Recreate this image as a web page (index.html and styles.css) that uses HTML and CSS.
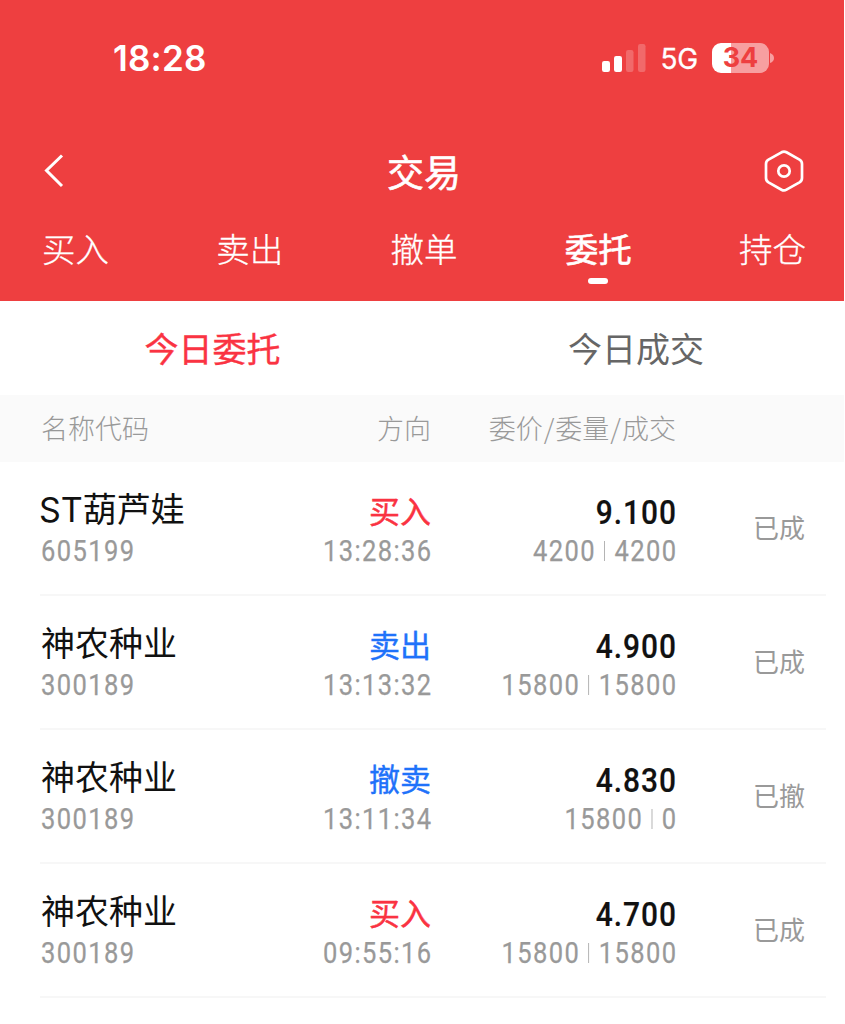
FILE: index.html
```html
<!DOCTYPE html>
<html lang="zh-CN">
<head>
<meta charset="utf-8">
<title>交易</title>
<link rel="stylesheet" href="styles.css">
</head>
<body>
<div class="screen">
  <header class="header">
    <div class="status">
      <span class="clock">18:28</span>
      <div class="status-icons">
        <svg class="signal" width="44" height="28" viewBox="0 0 44 28" fill="#fff">
          <rect x="0" y="17" width="8" height="11" rx="2.2"/>
          <rect x="12" y="12" width="8" height="16" rx="2.2"/>
          <rect x="24" y="6" width="7.5" height="22" rx="2.2" opacity=".22"/>
          <rect x="36" y="0" width="7.5" height="28" rx="2.2" opacity=".22"/>
        </svg>
        <span class="network">5G</span>
        <span class="battery"><span class="level">34</span></span>
        <svg class="cap" width="4" height="10" viewBox="0 0 4 10"><path d="M0 0Q4 1.500 4 5Q4 8.500 0 10Z" fill="#fff" opacity=".5"/></svg>
      </div>
    </div>
    <div class="titlebar">
      <svg class="back" width="20" height="34" viewBox="0 0 20 34" fill="none" stroke="#fff" stroke-width="3"><path d="M18 1.500L2.500 16.500L18 32"/></svg>
      <h1 class="title">交易</h1>
      <svg class="settings" width="40" height="42" viewBox="0 0 40 42" fill="none" stroke="#fff" stroke-width="2.700" stroke-linejoin="round">
        <path d="M17.500 2.300Q20 .9 22.500 2.300L35.500 9.700Q38 11.200 38 14V28Q38 30.800 35.500 32.300L22.500 39.700Q20 41.100 17.500 39.700L4.500 32.300Q2 30.800 2 28V14Q2 11.200 4.500 9.700Z"/>
        <circle cx="20" cy="21" r="5.700"/>
      </svg>
    </div>
    <nav class="tabs">
      <span class="tab">买入</span>
      <span class="tab">卖出</span>
      <span class="tab">撤单</span>
      <span class="tab active">委托</span>
      <span class="tab">持仓</span>
    </nav>
  </header>
  <div class="subtabs">
    <span class="subtab current">今日委托</span>
    <span class="subtab">今日成交</span>
  </div>
  <div class="columns grid">
    <span>名称代码</span>
    <span class="right">方向</span>
    <span class="right">委价<span class="slash">/</span>委量<span class="slash">/</span>成交</span>
  </div>
  <main class="orders">
    <div class="order grid">
      <div class="cell"><div class="name"><span class="latin">ST</span>葫芦娃</div><div class="num">605199</div></div>
      <div class="cell right"><div class="side buy">买入</div><div class="num">13:28:36</div></div>
      <div class="cell right"><div class="price">9.100</div><div class="num amounts"><span>4200</span><i class="bar"></i><span>4200</span></div></div>
      <div class="state">已成</div>
    </div>
    <div class="order grid">
      <div class="cell"><div class="name">神农种业</div><div class="num">300189</div></div>
      <div class="cell right"><div class="side sell">卖出</div><div class="num">13:13:32</div></div>
      <div class="cell right"><div class="price">4.900</div><div class="num amounts"><span>15800</span><i class="bar"></i><span>15800</span></div></div>
      <div class="state">已成</div>
    </div>
    <div class="order grid">
      <div class="cell"><div class="name">神农种业</div><div class="num">300189</div></div>
      <div class="cell right"><div class="side sell">撤卖</div><div class="num">13:11:34</div></div>
      <div class="cell right"><div class="price">4.830</div><div class="num amounts"><span>15800</span><i class="bar"></i><span>0</span></div></div>
      <div class="state">已撤</div>
    </div>
    <div class="order grid">
      <div class="cell"><div class="name">神农种业</div><div class="num">300189</div></div>
      <div class="cell right"><div class="side buy">买入</div><div class="num">09:55:16</div></div>
      <div class="cell right"><div class="price">4.700</div><div class="num amounts"><span>15800</span><i class="bar"></i><span>15800</span></div></div>
      <div class="state">已成</div>
    </div>
  </main>
</div>
</body>
</html>
```
FILE: styles.css
```css
* { box-sizing: border-box; }
body {
  margin: 0;
  background: #fff;
  font-family: "Noto Sans CJK SC", sans-serif;
  overflow: hidden;
}
.screen { width: 844px; height: 1024px; }

.header { height: 301px; background: #ee3f40; color: #fff; }
.status {
  display: flex;
  justify-content: space-between;
  align-items: center;
  height: 116px;
  padding: 0 70px 0 113px;
}
.clock { font: 600 35px/40px Inter, sans-serif; letter-spacing: .2px; }
.status-icons { display: flex; align-items: center; }
.signal { margin-top: -1px; }
.network { margin: 2px 0 0 14px; font: 400 28px/30px Inter, sans-serif; letter-spacing: -.2px; -webkit-text-stroke: .3px #fff; }
.battery {
  display: flex;
  justify-content: center;
  width: 57px;
  height: 30px;
  margin-left: 14px;
  border-radius: 9px;
  background: linear-gradient(90deg, #fff 34%, #f79fa0 34%);
}
.level { color: #ee3f40; font: 700 27px/30px Inter, sans-serif; }
.cap { margin-left: 1px; }

.titlebar {
  display: grid;
  grid-template-columns: 1fr auto 1fr;
  align-items: center;
  height: 110px;
  padding: 0 40px 0 44px;
}
.title { margin: 0; font-size: 37px; line-height: 50px; font-weight: 400; -webkit-text-stroke: .6px #fff; }
.settings { justify-self: end; }
.tabs { display: flex; justify-content: space-between; padding: 0 38px 0 42px; }
.tab {
  display: flex;
  flex-direction: column;
  align-items: center;
  font-size: 33.5px;
  line-height: 44px;
  font-weight: 300;
  -webkit-text-stroke: .3px #fff;
}
.active { font-weight: 400; -webkit-text-stroke: .6px #fff; }
.active::after {
  content: "";
  width: 20px;
  height: 6px;
  margin-top: 8px;
  border-radius: 3px;
  background: #fff;
}

.subtabs { display: grid; grid-template-columns: 425px 422px; height: 94px; }
.subtab { text-align: center; font-size: 34px; line-height: 94px; color: #666; }
.current { color: #fa3342; -webkit-text-stroke: .4px #fa3342; }

.grid { display: grid; grid-template-columns: 200px 190px 245px 129px; }
.right { text-align: right; }
.columns {
  height: 67px;
  padding-left: 41px;
  background: #fafafa;
  color: #999;
  font-size: 27px;
  line-height: 66px;
  font-weight: 300;
}
.slash { padding: 0 1px; }
.order {
  height: 134px;
  margin: 0 18px 0 40px;
  padding-left: 1px;
  border-bottom: 2px solid #f7f7f7;
}
.cell { padding-top: 24px; }
.name, .side, .price { height: 50px; white-space: nowrap; }
.name { font-size: 34px; line-height: 44px; color: #111; }
.latin { margin-left: -2px; font: 400 34px/44px Inter, sans-serif; }
.side { font-size: 31px; line-height: 48px; -webkit-text-stroke: .4px currentColor; }
.buy { color: #fa3342; }
.sell { color: #1f72fa; }
.price, .num { transform: scaleX(.88); transform-origin: left; }
.right > .price, .right > .num { transform-origin: right; }
.price { font: 500 34px/53px Roboto, sans-serif; letter-spacing: 1.1px; margin-right: -1px; color: #111; -webkit-text-stroke: .2px #111; }
.num { height: 30px; font: 400 29px/30px Roboto, sans-serif; letter-spacing: 1.6px; color: #999; -webkit-text-stroke: .25px #999; }
.right > .num { margin-right: -1.6px; }
.amounts { display: flex; justify-content: flex-end; align-items: center; }
.bar { width: 1.2px; height: 20px; margin: 0 11px 0 9px; background: #aaa; }
.state { text-align: right; font-size: 26px; line-height: 130px; color: #999; }
```
